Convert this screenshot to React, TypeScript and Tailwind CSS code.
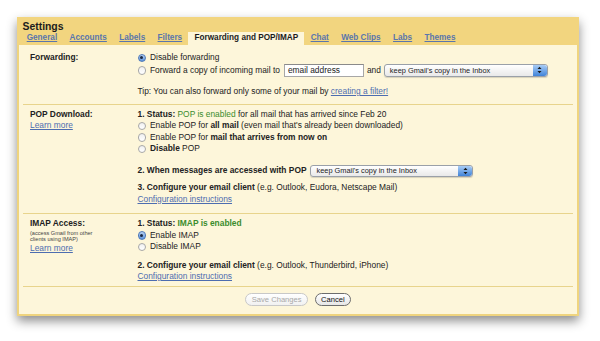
import React from 'react';

const tabs = ['General', 'Accounts', 'Labels', 'Filters', 'Forwarding and POP/IMAP', 'Chat', 'Web Clips', 'Labs', 'Themes'];

function Radio({ checked }: { checked?: boolean }) {
    return (
        <span
            className={
                'mr-[4px] inline-flex h-[8.5px] w-[8.5px] shrink-0 items-center justify-center rounded-full border ' +
                (checked
                    ? 'border-[#4f79b8] bg-gradient-to-b from-[#b9d3f3] to-[#5c93dc]'
                    : 'border-[#a8a8a8] bg-gradient-to-b from-[#f0f0f0] to-[#ffffff]')
            }
        >
            {checked && <span className="h-[3px] w-[3px] rounded-full bg-[#1d2a44]" />}
        </span>
    );
}

function Select({ width }: { width: string }) {
    return (
        <span className={`${width} inline-flex h-[12.5px] items-center rounded-[3px] border border-[#9aa0a8] bg-gradient-to-b from-[#ffffff] to-[#e9e9e9] shadow-[0_1px_1px_rgba(0,0,0,0.15)]`}>
            <span className="flex-1 pl-[5px] text-[7.4px] leading-none text-[#222]">keep Gmail's copy in the Inbox</span>
            <span className="flex h-full w-[14px] flex-col items-center justify-center rounded-r-[3px] bg-gradient-to-b from-[#a9cdf5] to-[#3f83d8]">
                <svg width="5" height="8" viewBox="0 0 5 8">
                    <path d="M0.5 3 L2.5 0.8 L4.5 3 Z M0.5 5 L2.5 7.2 L4.5 5 Z" fill="#1a1a1a" />
                </svg>
            </span>
        </span>
    );
}

function Line({ children, className = '' }: { children: React.ReactNode; className?: string }) {
    return <div className={`flex h-[11.5px] items-center whitespace-nowrap ${className}`}>{children}</div>;
}

function Link({ children }: { children: React.ReactNode }) {
    return <span className="text-[#4d6db0] underline decoration-[0.5px] underline-offset-[1px]">{children}</span>;
}

export default function App() {
    return (
        <div className="h-[341px] w-[600px] bg-white p-[17px] font-['Liberation_Sans',Arial,sans-serif] text-[8.4px] text-[#222]">
            <div className="flex h-[299px] w-[562px] flex-col shadow-[0_5px_10px_rgba(0,0,0,0.45)]">
                {/* Header */}
                <div className="h-[28px] bg-[#f2d57f]">
                    <div className="h-[15px] pl-[5.5px] pt-[2.5px] text-[10.4px] font-bold leading-[13px] text-[#1c1c1c]">Settings</div>
                    <div className="flex h-[13px] pl-[3.5px]">
                        {tabs.map((t) => (
                            <div
                                key={t}
                                className={
                                    'flex items-center px-[6.2px] text-[8.2px] font-bold ' +
                                    (t === 'Forwarding and POP/IMAP'
                                        ? 'bg-[#fdf6da] text-[#1c1c1c]'
                                        : 'text-[#5a76ac] underline decoration-[0.5px] underline-offset-[1px]')
                                }
                            >
                                {t}
                            </div>
                        ))}
                    </div>
                </div>

                {/* Content */}
                <div className="flex flex-1 flex-col border-x-2 border-b-2 border-[#efd47e] bg-[#fdf6da] leading-[11.5px]">
                    {/* Forwarding */}
                    <div className="mx-[4px] flex border-b border-[#e8d48c] pb-[6.5px] pt-[7px]">
                        <div className="w-[114.5px] pl-[7px] font-bold">Forwarding:</div>
                        <div>
                            <Line>
                                <Radio checked />
                                Disable forwarding
                            </Line>
                            <div className="flex h-[13.5px] items-center whitespace-nowrap">
                                <Radio />
                                Forward a copy of incoming mail to
                                <span className="ml-[4px] flex h-[13px] w-[80px] items-center border border-[#a7a7a7] border-t-[#8a8a8a] bg-white pl-[3px]">email address</span>
                                <span className="ml-[3px] mr-[3px]">and</span>
                                <Select width="w-[164px]" />
                            </div>
                            <Line className="mt-[9px]">
                                Tip: You can also forward only some of your mail by&nbsp;<Link>creating a filter!</Link>
                            </Line>
                        </div>
                    </div>

                    {/* POP */}
                    <div className="mx-[4px] flex border-b border-[#e8d48c] pb-[8px] pt-[3.5px]">
                        <div className="w-[114.5px] pl-[7px]">
                            <div className="font-bold">POP Download:</div>
                            <Link>Learn more</Link>
                        </div>
                        <div>
                            <Line>
                                <b>1. Status:</b>&nbsp;<span className="text-[#3b8c2c]">POP is enabled</span>&nbsp;for all mail that has arrived since Feb 20
                            </Line>
                            <Line>
                                <Radio />
                                Enable POP for&nbsp;<b>all mail</b>&nbsp;(even mail that's already been downloaded)
                            </Line>
                            <Line>
                                <Radio />
                                Enable POP for&nbsp;<b>mail that arrives from now on</b>
                            </Line>
                            <Line>
                                <Radio />
                                <b>Disable</b>&nbsp;POP
                            </Line>
                            <div className="mt-[10px] flex h-[13px] items-center whitespace-nowrap">
                                <b>2. When messages are accessed with POP</b>
                                <span className="ml-[4px]">
                                    <Select width="w-[163px]" />
                                </span>
                            </div>
                            <Line className="mt-[4.5px]">
                                <b>3. Configure your email client</b>&nbsp;(e.g. Outlook, Eudora, Netscape Mail)
                            </Line>
                            <Line>
                                <Link>Configuration instructions</Link>
                            </Line>
                        </div>
                    </div>

                    {/* IMAP */}
                    <div className="mx-[4px] flex border-b border-[#e8d48c] pb-[3.5px] pt-[4px]">
                        <div className="w-[114.5px] pl-[7px]">
                            <div className="font-bold">IMAP Access:</div>
                            <div className="text-[5.6px] leading-[6.5px] text-[#444]">
                                (access Gmail from other
                                <br />
                                clients using IMAP)
                            </div>
                            <Link>Learn more</Link>
                        </div>
                        <div>
                            <Line>
                                <b>1. Status:</b>&nbsp;<b className="text-[#3b8c2c]">IMAP is enabled</b>
                            </Line>
                            <Line>
                                <Radio checked />
                                Enable IMAP
                            </Line>
                            <Line>
                                <Radio />
                                Disable IMAP
                            </Line>
                            <Line className="mt-[7px]">
                                <b>2. Configure your email client</b>&nbsp;(e.g. Outlook, Thunderbird, iPhone)
                            </Line>
                            <Line>
                                <Link>Configuration instructions</Link>
                            </Line>
                        </div>
                    </div>

                    {/* Buttons */}
                    <div className="flex justify-center gap-[7px] pt-[6px]">
                        <span className="flex h-[13px] items-center rounded-full border border-[#c8c8c8] bg-gradient-to-b from-[#ffffff] to-[#f1f1f1] px-[5.5px] text-[7.6px] text-[#a8a8a8]">
                            Save Changes
                        </span>
                        <span className="flex h-[13px] items-center rounded-full border border-[#6d6d6d] bg-gradient-to-b from-[#ffffff] to-[#e6e6e6] px-[5px] text-[7.6px] text-[#111]">
                            Cancel
                        </span>
                    </div>
                </div>
            </div>
        </div>
    );
}
